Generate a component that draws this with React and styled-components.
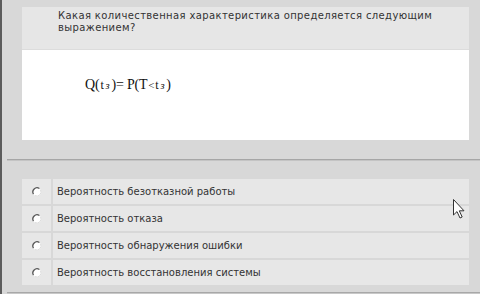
import React from "react";
import styled, { createGlobalStyle } from "styled-components";

const Global = createGlobalStyle`
  html, body { margin: 0; padding: 0; background: #d8d8d8; }
  body { font-family: "DejaVu Sans", Verdana, sans-serif; }
`;

const Page = styled.div`
  position: relative;
  height: 294px;
  width: 480px;
  box-sizing: border-box;
  background: #d8d8d8;
  border-left: 2px solid #5c5c5c;
  display: flex;
  flex-direction: column;
  overflow: hidden;
`;

const QuestionPanel = styled.div`
  margin: 7px 0 0 20px;
  width: 447px;
  display: flex;
  flex-direction: column;
`;

const QuestionHeader = styled.div`
  height: 43px;
  box-sizing: border-box;
  background: #e6e6e6;
  border-bottom: 1px solid #dcdcdc;
  padding: 3px 30px 0 36px;
  font-size: 10px;
  line-height: 12px;
  letter-spacing: 0.38px;
  color: #333;
`;

const QuestionBody = styled.div`
  height: 90px;
  background: #fff;
  padding: 27px 0 0 63px;
  box-sizing: border-box;
`;

const Formula = styled.div`
  font-family: "Liberation Serif", "Times New Roman", serif;
  font-size: 14px;
  color: #111;
  letter-spacing: -0.2px;
`;

const Small = styled.span`
  font-size: ${(p) => p.$s || 12}px;
  margin: ${(p) => p.$m || "0"};
`;

const Sub = styled.span`
  font-size: 10.5px;
  font-style: italic;
  margin: 0 2px 0 2px;
`;

const Separator = styled.div`
  margin: 19px 0 0 5px;
  height: 2px;
  border-top: 1px solid #a6a6a6;
  border-bottom: 1px solid #c4c4c4;
  box-sizing: border-box;
`;

const Options = styled.div`
  margin: 18px 0 0 20px;
  width: 447px;
  display: flex;
  flex-direction: column;
  gap: 2px;
`;

const Row = styled.div`
  display: grid;
  grid-template-columns: 29px 1fr;
  column-gap: 2px;
  height: 25px;
`;

const RadioCell = styled.div`
  background: #e7e7e7;
  display: flex;
  align-items: center;
  justify-content: center;
`;

const TextCell = styled.div`
  background: #e7e7e7;
  display: flex;
  align-items: center;
  padding-left: 4px;
  font-size: 10px;
  color: #333;
`;

const BottomLine = styled.div`
  margin: 7px 0 0 5px;
  height: 2px;
  border-top: 1px solid #a8a8a8;
  border-bottom: 1px solid #c8c8c8;
  box-sizing: border-box;
`;

const Cursor = styled.svg`
  position: absolute;
  left: 450px;
  top: 198px;
`;

const Radio = () => (
  <svg width="10" height="10" viewBox="0 0 10 10">
    <circle cx="5" cy="5" r="4.3" fill="#fff" />
    <path d="M1.5 7.2 A4.2 4.2 0 0 1 7.4 1.5" fill="none" stroke="#555" strokeWidth="1.3" />
    <path d="M8.5 2.8 A4.2 4.2 0 0 1 2.8 8.5" fill="none" stroke="#dcdcdc" strokeWidth="1" />
  </svg>
);

const options = [
  "Вероятность безотказной работы",
  "Вероятность отказа",
  "Вероятность обнаружения ошибки",
  "Вероятность восстановления системы",
];

export default function App() {
  return (
    <>
      <Global />
      <Page>
        <QuestionPanel>
          <QuestionHeader>
            Какая количественная характеристика определяется следующим выражением?
          </QuestionHeader>
          <QuestionBody>
            <Formula>
              Q(<Small $m="0 0 0 1px">t</Small>
              <Sub>з</Sub>)= P(T<Small $s={11} $m="0 1px">&lt;</Small>
              <Small>t</Small>
              <Sub>з</Sub>)
            </Formula>
          </QuestionBody>
        </QuestionPanel>
        <Separator />
        <Options>
          {options.map((o) => (
            <Row key={o}>
              <RadioCell>
                <Radio />
              </RadioCell>
              <TextCell>{o}</TextCell>
            </Row>
          ))}
        </Options>
        <BottomLine />
        <Cursor width="14" height="22" viewBox="0 0 14 22">
          <path
            d="M1.5 1.5 L1.5 17 L5 13.6 L8 20 L10.2 19 L7.3 12.8 L12 12.8 Z"
            fill="#fff"
            stroke="#333"
            strokeWidth="1"
            strokeLinejoin="round"
          />
        </Cursor>
      </Page>
    </>
  );
}
